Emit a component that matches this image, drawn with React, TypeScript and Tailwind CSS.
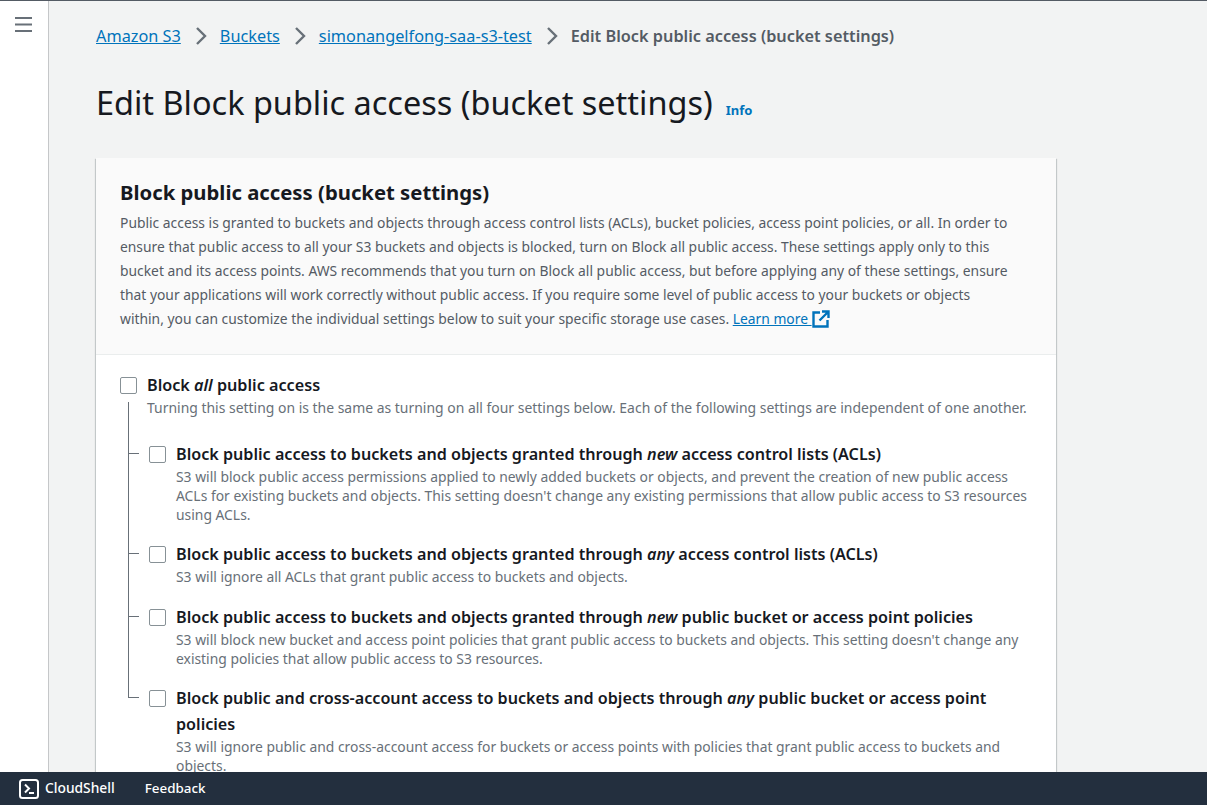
const font = "font-['Noto_Sans','Open_Sans',sans-serif]";

const options = [
  {
    title: (
      <>
        Block public access to buckets and objects granted through <i>new</i> access control lists (ACLs)
      </>
    ),
    text: "S3 will block public access permissions applied to newly added buckets or objects, and prevent the creation of new public access ACLs for existing buckets and objects. This setting doesn't change any existing permissions that allow public access to S3 resources using ACLs.",
  },
  {
    title: (
      <>
        Block public access to buckets and objects granted through <i>any</i> access control lists (ACLs)
      </>
    ),
    text: "S3 will ignore all ACLs that grant public access to buckets and objects.",
  },
  {
    title: (
      <>
        Block public access to buckets and objects granted through <i>new</i> public bucket or access point policies
      </>
    ),
    text: "S3 will block new bucket and access point policies that grant public access to buckets and objects. This setting doesn't change any existing policies that allow public access to S3 resources.",
  },
  {
    title: (
      <>
        Block public and cross-account access to buckets and objects through <i>any</i> public bucket or access point policies
      </>
    ),
    text: "S3 will ignore public and cross-account access for buckets or access points with policies that grant public access to buckets and objects.",
  },
];

function Checkbox({ className = "" }: { className?: string }) {
  return <span className={`block size-[17px] shrink-0 rounded-[2px] border border-[#879196] bg-white ${className}`} />;
}

function Crumb({ children }: { children: string }) {
  return <a className="text-[#0073bb] underline">{children}</a>;
}

function Sep() {
  return (
    <svg width="12" height="20" viewBox="0 0 12 20" className="ml-[14px] mr-[13px] shrink-0">
      <path d="M2 2l8 8-8 8" fill="none" stroke="#687078" strokeWidth="2.4" />
    </svg>
  );
}

export default function App() {
  return (
    <div className={`${font} flex h-[805px] w-[1207px] flex-col overflow-hidden border-t border-[#545b64] bg-[#f2f3f3] text-[#16191f]`}>
      <div className="flex min-h-0 flex-1">
        <aside className="w-[49px] shrink-0 border-r border-[#c5c7c9] bg-white pl-[15px] pt-[16px]">
          <svg width="18" height="15" viewBox="0 0 18 15" className="block">
            <path d="M0 1h17M0 7.5h17M0 14h17" stroke="#687078" strokeWidth="2" fill="none" />
          </svg>
        </aside>
        <main className="min-w-0 flex-1 overflow-hidden pl-[47px]">
          <nav className="mt-[23px] flex h-[24px] items-center text-[16.3px] leading-6">
            <Crumb>Amazon S3</Crumb>
            <Sep />
            <Crumb>Buckets</Crumb>
            <Sep />
            <Crumb>simonangelfong-saa-s3-test</Crumb>
            <Sep />
            <span className="font-semibold text-[#545b64]">Edit Block public access (bucket settings)</span>
          </nav>
          <div className="mt-[31px] flex h-[48px] items-baseline">
            <h1 className="text-[32.45px] font-normal leading-[48px]">Edit Block public access (bucket settings)</h1>
            <a className="ml-[13px] text-[13px] font-bold text-[#0073bb]">Info</a>
          </div>
          <section className="mt-[31px] w-[960px] bg-white shadow-[0_1px_1px_0_rgba(0,28,36,0.3),1px_1px_1px_0_rgba(0,28,36,0.15),-1px_1px_1px_0_rgba(0,28,36,0.15)]">
            <header className="h-[197px] border-b border-[#eaeded] bg-[#fafafa] px-6 pt-[19px]">
              <h2 className="text-[20.3px] font-bold leading-[30px]">Block public access (bucket settings)</h2>
              <p className="mt-[4px] max-w-[895px] text-[13.85px] leading-6 text-[#545b64]">
                Public access is granted to buckets and objects through access control lists (ACLs), bucket policies, access point policies, or all. In order to ensure that public access to all your S3 buckets and objects is blocked, turn on Block all public access. These settings apply only to this bucket and its access points. AWS recommends that you turn on Block all public access, but before applying any of these settings, ensure that your applications will work correctly without public access. If you require some level of public access to your buckets or objects within, you can customize the individual settings below to suit your specific storage use cases.{" "}
                <a className="text-[#0073bb] underline">Learn more&nbsp;</a>
                <svg width="18" height="18" viewBox="0 0 18 18" className="inline-block align-[-4px]">
                  <path d="M8 2.5H1.5v14h14V10" stroke="#0073bb" strokeWidth="2.4" fill="none" />
                  <path d="M10 1.5h6.5V8M16 2L7.5 10.5" stroke="#0073bb" strokeWidth="2.4" fill="none" />
                </svg>
              </p>
            </header>
            <div className="px-6 pt-[17px]">
              <div className="flex gap-[10px]">
                <Checkbox className="mt-[5px]" />
                <div className="min-w-0">
                  <div className="text-[16.2px] font-semibold leading-[26px]">
                    Block <i>all</i> public access
                  </div>
                  <p className="text-[13.95px] leading-[19px] text-[#687078]">
                    Turning this setting on is the same as turning on all four settings below. Each of the following settings are independent of one another.
                  </p>
                </div>
              </div>
              <div className="mt-[24px] flex flex-col gap-[17.25px] pl-[8px]">
                {options.map((o, i) => (
                  <div key={i} className="relative flex gap-[10px] pl-[21px]">
                    {/* tree connector */}
                    <span
                      className={`absolute left-0 w-px bg-[#687078] ${
                        i === 0 ? "-top-[39px] bottom-[-18px]" : i === 3 ? "top-0 h-[13px]" : "top-0 bottom-[-18px]"
                      }`}
                    />
                    <span className="absolute left-0 top-[12px] h-px w-[11px] bg-[#687078]" />
                    <Checkbox className="mt-[5px]" />
                    <div className="min-w-0">
                      <div className="text-[16.15px] font-semibold leading-[26px]">{o.title}</div>
                      <p className="text-[13.88px] leading-[19px] text-[#687078]">{o.text}</p>
                    </div>
                  </div>
                ))}
              </div>
            </div>
          </section>
        </main>
      </div>
      <footer className="flex h-[33px] shrink-0 items-center bg-[#232f3e] pl-[19px] text-[13.8px] font-medium text-white">
        <svg width="20" height="20" viewBox="0 0 20 20" className="mr-[6px]">
          <rect x="1" y="1" width="18" height="18" rx="2.5" fill="none" stroke="#fff" strokeWidth="2" />
          <path d="M6 5.5L10 9.5L6 13.5" fill="none" stroke="#fff" strokeWidth="2" />
          <path d="M10 14h5" stroke="#fff" strokeWidth="2" />
        </svg>
        CloudShell
        <span className="ml-[30px] text-[13.4px]">Feedback</span>
      </footer>
    </div>
  );
}
